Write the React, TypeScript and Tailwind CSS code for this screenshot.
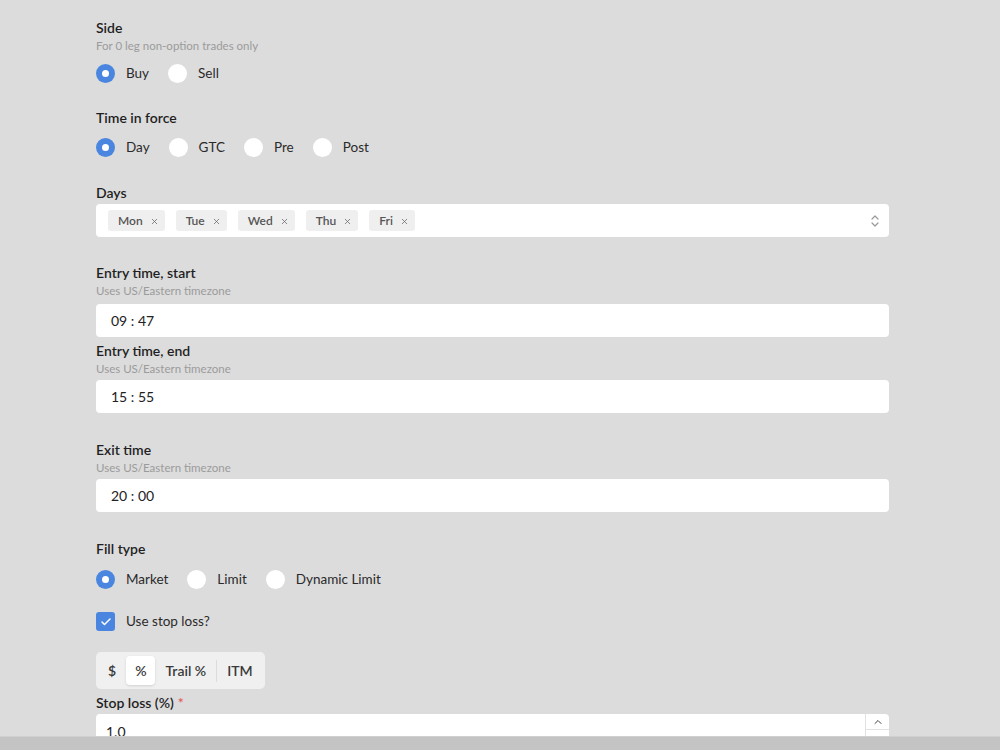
import { Check, ChevronUp, X } from 'lucide-react'

const font = { fontFamily: 'Lato, "Noto Sans", sans-serif' }

function Radio({ label, checked }: { label: string; checked?: boolean }) {
  return (
    <label className="flex items-center gap-[11px]">
      {checked ? (
        <span className="w-[19px] h-[19px] rounded-full bg-[#4a86e0] flex items-center justify-center">
          <span className="w-[7px] h-[7px] rounded-full bg-white" />
        </span>
      ) : (
        <span className="w-[19px] h-[19px] rounded-full bg-white" />
      )}
      <span className="text-[13.5px] leading-[21px] text-[#2a2a2a]">{label}</span>
    </label>
  )
}

function Label({ children, required }: { children: React.ReactNode; required?: boolean }) {
  return (
    <div className="text-[14px] font-semibold text-[#1f1f1f] leading-[20px]">
      {children}
      {required && <span className="text-[#e35d5d] ml-1">*</span>}
    </div>
  )
}

function Hint({ children }: { children: React.ReactNode }) {
  return <div className="text-[11.5px] text-[#9b9b9b] leading-[16px]">{children}</div>
}

function TimeInput({ value }: { value: string }) {
  return (
    <div className="h-[33px] bg-white rounded-[4px] flex items-center pl-[15px] text-[14px] text-[#222]">
      {value}
    </div>
  )
}

function Tag({ name }: { name: string }) {
  return (
    <span className="h-[21px] pl-[10px] pr-[6px] pt-[1px] rounded-[3px] bg-[#efefef] flex items-center gap-[7px] text-[12px] font-semibold text-[#555]">
      {name}
      <X className="w-[9px] h-[9px] text-[#666]" strokeWidth={2} />
    </span>
  )
}

export default function App() {
  const days = ['Mon', 'Tue', 'Wed', 'Thu', 'Fri']

  return (
    <div className="h-[750px] flex flex-col bg-[#dcdcdc]" style={font}>
      <div className="flex-1 overflow-hidden pl-[96px] pr-[111px] pt-[18px]">
        {/* Side */}
        <Label>Side</Label>
        <Hint>For 0 leg non-option trades only</Hint>
        <div className="flex gap-[19px] mt-[9px]">
          <Radio label="Buy" checked />
          <Radio label="Sell" />
        </div>

        {/* Time in force */}
        <div className="mt-[24px]">
          <Label>Time in force</Label>
        </div>
        <div className="flex gap-[19px] mt-[9px]">
          <Radio label="Day" checked />
          <Radio label="GTC" />
          <Radio label="Pre" />
          <Radio label="Post" />
        </div>

        {/* Days */}
        <div className="mt-[25px]">
          <Label>Days</Label>
        </div>
        <div className="mt-[1px] h-[33px] bg-white rounded-[4px] flex items-center pl-[12px] pr-[8px]">
          <div className="flex flex-1 gap-[11px]">
            {days.map((d) => (
              <Tag key={d} name={d} />
            ))}
          </div>
          <svg className="w-[12px] h-[14px] text-[#999]" viewBox="0 0 12 14" fill="none" stroke="currentColor" strokeWidth="1.2" strokeLinecap="round" strokeLinejoin="round">
            <path d="M3 5l3-3 3 3" />
            <path d="M3 9l3 3 3-3" />
          </svg>
        </div>

        {/* Entry time, start */}
        <div className="mt-[26px]">
          <Label>Entry time, start</Label>
          <Hint>Uses US/Eastern timezone</Hint>
        </div>
        <div className="mt-[5px]">
          <TimeInput value="09 : 47" />
        </div>

        {/* Entry time, end */}
        <div className="mt-[4px]">
          <Label>Entry time, end</Label>
          <Hint>Uses US/Eastern timezone</Hint>
        </div>
        <div className="mt-[3px]">
          <TimeInput value="15 : 55" />
        </div>

        {/* Exit time */}
        <div className="mt-[27px]">
          <Label>Exit time</Label>
          <Hint>Uses US/Eastern timezone</Hint>
        </div>
        <div className="mt-[3px]">
          <TimeInput value="20 : 00" />
        </div>

        {/* Fill type */}
        <div className="mt-[27px]">
          <Label>Fill type</Label>
        </div>
        <div className="flex gap-[19px] mt-[10px]">
          <Radio label="Market" checked />
          <Radio label="Limit" />
          <Radio label="Dynamic Limit" />
        </div>

        {/* Stop loss toggle */}
        <label className="flex items-center gap-[11px] mt-[21px]">
          <span className="w-[19px] h-[19px] rounded-[3px] bg-[#4a86e0] flex items-center justify-center">
            <Check className="w-[12px] h-[12px] text-white" strokeWidth={3} />
          </span>
          <span className="text-[13.5px] leading-[21px] text-[#2a2a2a]">Use stop loss?</span>
        </label>

        {/* Stop loss unit */}
        <div className="mt-[20px] inline-flex items-center h-[37px] p-[4px] rounded-[5px] bg-[#f0f0f0] text-[14px] font-semibold text-[#3a3a3a]">
          <span className="px-[8px]">$</span>
          <span className="h-[29px] px-[9px] ml-[2px] flex items-center bg-white rounded-[4px] shadow-sm">%</span>
          <span className="px-[10px]">Trail %</span>
          <span className="w-px h-[22px] bg-[#dcdcdc]" />
          <span className="pl-[10px] pr-[8px]">ITM</span>
        </div>

        {/* Stop loss value */}
        <div className="mt-[4px]">
          <Label required>Stop loss (%)</Label>
        </div>
        <div className="mt-[1px] h-[33px] bg-white rounded-[4px] flex">
          <div className="flex-1 pl-[10px] pt-[8px] text-[14px] leading-[20px] text-[#222]">1.0</div>
          <div className="w-[24px] border-l border-[#e2e2e2] flex flex-col">
            <div className="h-[16px] flex items-center justify-center border-b border-[#e2e2e2]">
              <ChevronUp className="w-[12px] h-[12px] text-[#444]" strokeWidth={2} />
            </div>
          </div>
        </div>
      </div>
      <div className="h-[14px] bg-[#c4c4c4] border-t border-[#d0d0d0]" />
    </div>
  )
}
